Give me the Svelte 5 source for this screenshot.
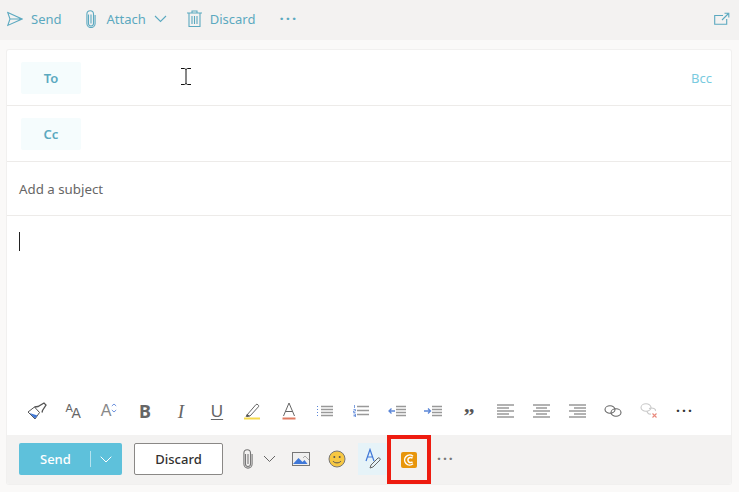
<script>
  const fmt = ['paint','size','grow','bold','italic','under','hl','color','bul','num','out','ind','quote','al','ac','ar','link','unlink','more'];
</script>

<div class="page">
  <header class="top">
    <button class="act first">
      <svg width="16" height="16" viewBox="0 0 16 16"><path d="M.8 1.600 15 8 .8 14.400 3 8ZM3 8h12" class="s"/></svg>
      <span>Send</span>
    </button>
    <button class="act attach">
      <svg width="12" height="18" viewBox="0 0 12 18"><path d="M3.500 4.500v9a2.500 2.500 0 0 0 5 0V4a3.300 3.300 0 0 0-6.600 0v9.500a4.100 4.100 0 0 0 8.200 0V5M6 4.500v9" class="s"/></svg>
      <span>Attach</span>
      <svg class="chev" width="13" height="8" viewBox="0 0 13 8"><path d="m1 1 5.500 5.500L12 1" class="s"/></svg>
    </button>
    <button class="act discard">
      <svg width="15" height="17" viewBox="0 0 15 17"><path d="M0 3h15M5 3V1h5v2M2 3v13.500h11V3M5 6v8M7.500 6v8M10 6v8" class="s"/></svg>
      <span>Discard</span>
    </button>
    <span class="dots teal">···</span>
    <svg class="pop" width="16" height="13" viewBox="0 0 16 13"><path d="M9 3.500H.7v8.800h12V7M8 8l6-6M10.500 1.200h4.300v4.300" class="s"/></svg>
  </header>

  <main class="card">
    <div class="row rec">
      <button class="chip">To</button>
      <svg class="ibeam" width="10" height="17" viewBox="0 0 10 17"><path d="M0 .5h3.500L5 1.500 6.500.5H10M5 1.500v14M0 16.500h3.500L5 15.500l1.500 1H10" fill="none" stroke="#111" stroke-width="1"/></svg>
      <span class="bcc">Bcc</span>
    </div>
    <div class="row rec">
      <button class="chip">Cc</button>
    </div>
    <div class="row subject">Add a subject</div>
    <div class="body"><i class="caret"></i></div>

    <div class="fmt">
      {#each fmt as f}
        <span class="fb">
          {#if f === 'paint'}
            <svg width="20" height="18" viewBox="0 0 20 18"><path d="M1 10 7.500 5l5 5.500L8 17Z" fill="#fff" stroke="#555"/><path d="m2.500 11 8 2.500L8 16.500Z" fill="#3f78d8"/><path d="m7.500 5 3.500-.5 6-3.500 2 2-3.500 5.500-.5 2" fill="none" stroke="#555" stroke-width="1.300"/></svg>
          {:else if f === 'size'}
            <span class="aa"><b class="a1">A</b><b class="a2">A</b></span>
          {:else if f === 'grow'}
            <span class="grow">A<svg width="6" height="10" viewBox="0 0 6 10"><path d="m.8 3 2.200-2L5.200 3M.8 7 3 9l2.200-2" fill="none" stroke="#6d92dd"/></svg></span>
          {:else if f === 'bold'}
            <span class="tb b">B</span>
          {:else if f === 'italic'}
            <span class="tb it">I</span>
          {:else if f === 'under'}
            <span class="tb un">U</span>
          {:else if f === 'hl'}
            <svg width="18" height="18" viewBox="0 0 18 18"><path d="M3 13 12 2.500c1-1 3.500 1 2.500 2.200L6 14l-3 .5Z" fill="none" stroke="#666"/><path d="m1.500 15 1.500-3 3 2Z" fill="#555"/><rect y="15.500" width="16" height="2" fill="#f5d94c"/></svg>
          {:else if f === 'color'}
            <svg width="14" height="18" viewBox="0 0 14 18"><path d="M1.500 14 7 1l5.500 13M3.500 9.500h7" fill="none" stroke="#666"/><rect x=".5" y="15.500" width="13" height="2" fill="#df7b62"/></svg>
          {:else if f === 'bul'}
            <svg width="16" height="12" viewBox="0 0 16 12"><path d="M4 1.500h12M4 4.500h12M4 7.500h12M4 10.500h12" stroke="#999" stroke-width="1.300"/><path d="M.5 1v1M.5 4v1M.5 7v1M.5 10v1" stroke="#5b86d8"/></svg>
          {:else if f === 'num'}
            <svg width="16" height="12" viewBox="0 0 16 12"><path d="M4 1.500h12M4 5.500h12M4 9.500h12" stroke="#999" stroke-width="1.300"/><path d="M1.500 0v3M.5 4.500h2v1.500h-2v1.500h2M.5 9h2v3h-2M.5 10.500h2" stroke="#5b86d8" fill="none" stroke-width=".8"/></svg>
          {:else if f === 'out'}
            <svg width="18" height="12" viewBox="0 0 18 12"><path d="M8 1.500h10M8 4.500h10M8 7.500h10M8 10.500h10" stroke="#999" stroke-width="1.300"/><path d="M7 6H1M3.500 3.500 1 6l2.500 2.500" fill="none" stroke="#5b86d8" stroke-width="1.300"/></svg>
          {:else if f === 'ind'}
            <svg width="18" height="12" viewBox="0 0 18 12"><path d="M8 1.500h10M8 4.500h10M8 7.500h10M8 10.500h10" stroke="#999" stroke-width="1.300"/><path d="M0 6h6M4 3.500 6.500 6 4 8.500" fill="none" stroke="#5b86d8" stroke-width="1.300"/></svg>
          {:else if f === 'quote'}
            <span class="q">”</span>
          {:else if f === 'al'}
            <svg width="17" height="14" viewBox="0 0 17 14"><path d="M0 1h17M0 4h12M0 7h17M0 10h12M0 13h17" stroke="#999" stroke-width="1.300"/></svg>
          {:else if f === 'ac'}
            <svg width="17" height="14" viewBox="0 0 17 14"><path d="M0 1h17M3 4h11M0 7h17M3 10h11M0 13h17" stroke="#999" stroke-width="1.300"/></svg>
          {:else if f === 'ar'}
            <svg width="17" height="14" viewBox="0 0 17 14"><path d="M0 1h17M5 4h12M0 7h17M5 10h12M0 13h17" stroke="#999" stroke-width="1.300"/></svg>
          {:else if f === 'link'}
            <svg width="18" height="12" viewBox="0 0 18 12"><g fill="none" stroke="#666" stroke-width="1.100"><ellipse cx="6" cy="4.500" rx="5" ry="3.700"/><ellipse cx="12" cy="7.500" rx="5" ry="3.700"/></g></svg>
          {:else if f === 'unlink'}
            <svg width="18" height="16" viewBox="0 0 18 16"><g fill="none" stroke="#c9c9c9" stroke-width="1.100"><ellipse cx="6" cy="4.500" rx="5" ry="3.700"/><path d="M9 5.500c4-1.500 7 .5 6.500 2.500M11 11c-2 .5-4-1-4-3"/></g><path d="m12.500 10.500 4 4M16.500 10.500l-4 4" stroke="#e9897c" stroke-width="1.100"/></svg>
          {:else}
            <span class="dots dark">···</span>
          {/if}
        </span>
      {/each}
    </div>

    <footer class="bar">
      <button class="send"><span>Send</span><i class="sep"></i><svg width="12" height="7" viewBox="0 0 12 7"><path d="m.7.700 5.300 5.300L11.300.700" fill="none" stroke="#fff"/></svg></button>
      <button class="disc">Discard</button>
      <span class="tool clip">
        <svg width="12" height="20" viewBox="0 0 12 20"><path d="M3.500 5v10a2.500 2.500 0 0 0 5 0V4a3.300 3.300 0 0 0-6.600 0v11a4.100 4.100 0 0 0 8.200 0V5M6 5v10" fill="none" stroke="#777" stroke-width="1.100"/></svg>
        <svg class="cv" width="13" height="8" viewBox="0 0 13 8"><path d="m1 1 5.500 5.500L12 1" fill="none" stroke="#666"/></svg>
      </span>
      <span class="tool img">
        <svg width="18" height="14" viewBox="0 0 18 14"><rect x=".5" y=".5" width="17" height="13" fill="#efefef" stroke="#777"/><path d="M1 12 6.500 6l4 4 2-2 3 4Z" fill="#3f78d8"/><path d="m11 6 2-2 4 4" fill="none" stroke="#aaa"/></svg>
      </span>
      <span class="tool emo">
        <svg width="18" height="18" viewBox="0 0 18 18"><circle cx="9" cy="9" r="8" fill="#f7c843" stroke="#777"/><circle cx="6.300" cy="7" r="1" fill="#555"/><circle cx="11.700" cy="7" r="1" fill="#555"/><path d="M5 11c1.500 2.500 6.500 2.500 8 0" fill="none" stroke="#555"/></svg>
      </span>
      <span class="tool sig">
        <svg width="16" height="22" viewBox="0 0 16 22"><path d="M1 13 5 1.500 9 13M2.500 9h5" fill="none" stroke="#3f78d8" stroke-width="1.200"/><path d="m5 20 1-3 7-7c1-1 3 1 2 2l-7 7Z" fill="none" stroke="#666"/></svg>
      </span>
      <span class="hilite">
        <svg width="16" height="16" viewBox="0 0 16 16"><rect width="16" height="16" rx="2" fill="#e8960c"/><path d="M12 4.300a5 5 0 1 0 0 7.400" fill="none" stroke="#fff" stroke-width="1.500"/><path d="M11.500 6.300a2.600 2.600 0 1 0 0 3.400" fill="none" stroke="#fff" stroke-width="1.500"/></svg>
      </span>
      <span class="dots bar-dots">···</span>
    </footer>
  </main>
</div>

<style>
  :global(body) { margin: 0; background: #faf9f8; }
  .page {
    width: 739px; height: 492px; overflow: hidden;
    font-family: "Noto Sans", "Open Sans", sans-serif;
    background: #faf9f8; box-sizing: border-box;
  }
  button { font: inherit; border: 0; background: none; padding: 0; color: inherit; }
  .s { fill: none; stroke: #5ba9c0; stroke-width: 1.100; }

  .top {
    height: 40px; background: #f3f2f1; display: flex; align-items: center;
    color: #5ba9c0; font-size: 13px; box-sizing: border-box; padding-bottom: 3px;
  }
  .act { display: flex; align-items: center; }
  .first { margin-left: 7px; gap: 8px; }
  .attach { margin-left: 23px; gap: 10px; }
  .attach .chev { margin-left: -2px; }
  .discard { margin-left: 20px; gap: 8px; }
  .dots { letter-spacing: 2px; font-weight: 700; line-height: 1; }
  .top .dots { margin-left: 24px; font-size: 15px; }
  .pop { margin-left: auto; margin-right: 9px; }

  .card {
    margin: 10px 8px 0 7px; background: #fff; height: 434px;
    border-radius: 2px; box-shadow: 0 0 0 1px #f1f0ef;
    display: flex; flex-direction: column; overflow: hidden;
  }
  .row { border-bottom: 1px solid #edebe9; display: flex; align-items: center; box-sizing: border-box; flex: none; }
  .rec { height: 56px; padding-left: 14px; position: relative; }
  .chip {
    width: 60px; height: 32px; padding-top: 1px; background: #f5fcfd; border-radius: 2px;
    color: #5ba9c0; font-size: 13px; font-weight: 600;
  }
  .ibeam { position: absolute; left: 174px; top: 18px; }
  .bcc { margin-left: auto; margin-right: 19px; color: #79cbe0; font-size: 13px; }
  .subject { height: 54px; padding-left: 12px; color: #666; font-size: 13.300px; }
  .body { height: 171px; padding: 16px 12px; box-sizing: border-box; flex: none; }
  .caret { display: block; width: 1px; height: 19px; background: #222; }

  .fmt { height: 48px; flex: none; display: flex; align-items: center; padding-left: 12px; }
  .fb { width: 36px; height: 36px; display: flex; align-items: center; justify-content: center; color: #666; }
  .aa { position: relative; width: 15px; height: 16px; }
  .aa b { position: absolute; font-weight: 400; line-height: 1; font-family: "Liberation Sans", sans-serif; }
  .a1 { left: 0; top: 0; font-size: 11px; }
  .a2 { left: 6px; top: 3px; font-size: 14px; }
  .grow { display: flex; align-items: flex-start; font-size: 16px; line-height: 1; color: #888; font-family: "Liberation Sans", sans-serif; }
  .tb { font-size: 17px; line-height: 1; }
  .b { font-weight: 700; font-size: 18px; }
  .it { font-family: "Liberation Serif", serif; font-style: italic; font-size: 19px; }
  .un { text-decoration: underline; text-underline-offset: 2px; font-family: "Liberation Sans", sans-serif; font-size: 17px; }
  .q { font-size: 22px; font-weight: 700; line-height: 1; height: 12px; color: #555; font-family: "Liberation Serif", serif; }
  .dark { color: #333; font-size: 14px; }

  .bar {
    flex: 1; min-height: 0; background: #f3f2f1; display: flex; align-items: center; padding-left: 12px;
  }
  .send {
    width: 103px; height: 32px; background: #5ec1db; border-radius: 2px; color: #fff; margin-bottom: 1px;
    font-weight: 500; font-size: 13px; display: flex; align-items: center;
  }
  .send span { margin-left: 21px; }
  .sep { width: 1px; height: 16px; background: #b5e3ef; margin: 0 9px 0 19px; }
  .disc {
    width: 89px; height: 32px; margin-left: 12px; margin-bottom: 1px; background: #fff; border: 1px solid #8a8886;
    border-radius: 2px; color: #323130; font-weight: 500; font-size: 13px; box-sizing: border-box;
  }
  .tool { display: flex; align-items: center; justify-content: center; height: 32px; margin-bottom: 1px; }
  .clip { margin-left: 19px; gap: 9px; }
  .img { margin-left: 16px; }
  .emo { margin-left: 18px; }
  .sig { margin-left: 12px; width: 29px; background: #e6f3f8; }
  .hilite {
    width: 36px; height: 41px; border: 4px solid #ee1c10; display: flex;
    align-items: center; justify-content: center; box-sizing: content-box;
  }
  .bar-dots { margin-left: 6px; margin-bottom: 1px; color: #777; font-size: 14px; }
</style>
